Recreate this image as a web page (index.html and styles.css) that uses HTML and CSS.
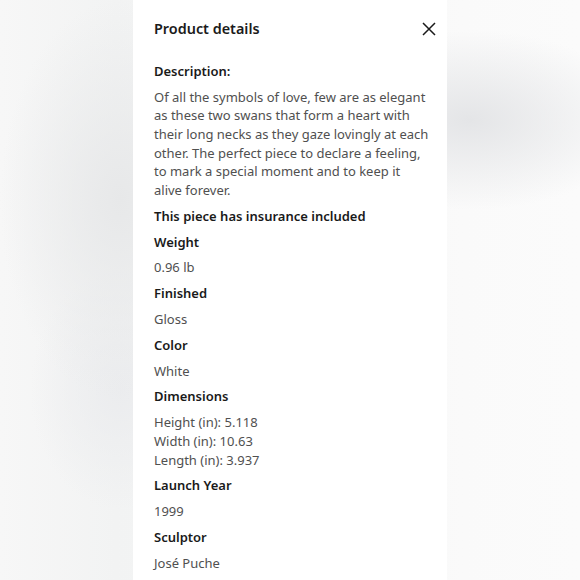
FILE: index.html
```html
<!DOCTYPE html>
<html lang="en">
<head>
<meta charset="utf-8">
<title>Product details</title>
<link rel="stylesheet" href="styles.css">
</head>
<body>
<div class="backdrop">
  <section class="panel">
    <header class="panel-head">
      <h1 class="title">Product details</h1>
      <button class="close" aria-label="Close">
        <svg width="14" height="14" viewBox="0 0 14 14"><path d="M1 1L13 13M13 1L1 13" stroke="#1a1a1a" stroke-width="1.5" fill="none"/></svg>
      </button>
    </header>
    <div class="details">
      <p class="label">Description:</p>
      <p class="value">Of all the symbols of love, few are as elegant as these two swans that form a heart with their long necks as they gaze lovingly at each other. The perfect piece to declare a feeling, to mark a special moment and to keep it alive forever.</p>
      <p class="label">This piece has insurance included</p>
      <p class="label">Weight</p>
      <p class="value">0.96 lb</p>
      <p class="label">Finished</p>
      <p class="value">Gloss</p>
      <p class="label">Color</p>
      <p class="value">White</p>
      <p class="label">Dimensions</p>
      <p class="value">Height (in): 5.118<br>Width (in): 10.63<br>Length (in): 3.937</p>
      <p class="label">Launch Year</p>
      <p class="value">1999</p>
      <p class="label">Sculptor</p>
      <p class="value">José Puche</p>
    </div>
  </section>
</div>
</body>
</html>
```
FILE: styles.css
```css
* { box-sizing: border-box; }
html, body { margin: 0; padding: 0; height: 100%; }
body {
  font-family: "Noto Sans", "Open Sans", sans-serif;
  overflow: hidden;
}
.backdrop {
  height: 580px;
  display: flex;
  justify-content: center;
  background:
    radial-gradient(ellipse 120px 200px at 120px 200px, #e7e8e9 0%, rgba(231,232,233,0) 100%),
    radial-gradient(ellipse 90px 120px at 120px 390px, #ebecee 0%, rgba(235,236,238,0) 100%),
    radial-gradient(ellipse 170px 90px at 470px 120px, #e4e5e7 0%, rgba(228,229,231,0) 100%),
    linear-gradient(to right, #f7f7f7 0%, #f2f3f3 20%, #fafafa 80%, #fbfbfb 100%);
}
.panel {
  width: 314px;
  background: #fff;
  padding: 0 11px 0 21px;
}
.panel-head {
  display: flex;
  align-items: center;
  justify-content: space-between;
  padding-top: 19px;
  margin-bottom: 23px;
}
.title {
  margin: 0;
  font-size: 14.4px;
  font-weight: 600;
  line-height: 20px;
  color: #1b1b1b;
}
.close {
  border: 0;
  background: none;
  padding: 0;
  width: 14px;
  height: 14px;
  display: block;
  cursor: pointer;
}
.close svg { display: block; }
.details {
  display: flex;
  flex-direction: column;
  gap: 7.15px;
  padding-right: 6px;
}
.details p {
  margin: 0;
  font-size: 13px;
  line-height: 18.65px;
}
.label { font-weight: 600; color: #1a1a1a; }
.value { color: #505050; }
```
